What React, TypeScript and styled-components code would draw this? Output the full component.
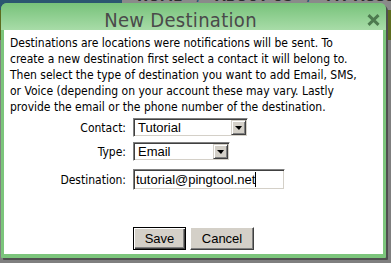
import styled, { createGlobalStyle } from "styled-components";

const GlobalStyle = createGlobalStyle`
	html, body {
		margin: 0;
		padding: 0;
	}
	body {
		background: #7f7f7f;
		overflow: hidden;
	}
`;

const Page = styled.div`
	position: relative;
	width: 391px;
	height: 263px;
	overflow: hidden;
	background: #7f7f7f;
`;

const TopBar = styled.div`
	display: flex;
	height: 10px;
	background: #2b5670;
`;

const Nav = styled.nav`
	margin-left: 122px;
	flex: 1;
	display: flex;
	align-items: flex-end;
	gap: 14px;
	padding-left: 15px;
	background: #8a8a8a;
	color: #2c2c2c;
	font: bold 15px "DejaVu Sans Condensed", "DejaVu Sans", sans-serif;
	line-height: 1;
	white-space: nowrap;
	overflow: hidden;

	& > span {
		margin-bottom: 6px;
	}
`;

const NavSep = styled.span`
	color: #2b5670;
`;

const OliveBand = styled.div`
	height: 30px;
	background: #5c6b1f;
`;

const Dialog = styled.section`
	position: absolute;
	left: 1px;
	top: 3px;
	width: 385px;
	height: 255px;
	box-sizing: border-box;
	display: flex;
	flex-direction: column;
	padding: 0 3px 4px;
	background: #7cc57c;
	border-radius: 6px 6px 1px 1px;
	box-shadow: 2px 2px 0 #4f4f4f;
`;

const TitleBar = styled.header`
	display: grid;
	grid-template-columns: 1fr auto;
	height: 27px;
	box-sizing: border-box;
	margin: 0 -3px;
	padding-top: 7px;
	border-radius: 6px 6px 0 0;
	background: linear-gradient(#77c27a, #a8dca8);
`;

const Title = styled.h1`
	margin: 0;
	padding-right: 7px;
	text-align: center;
	color: #4a4a4a;
	font: normal 20px "DejaVu Sans Condensed", "DejaVu Sans", sans-serif;
	letter-spacing: 0.3px;
	line-height: 20px;
`;

const Close = styled.svg`
	margin: 4px 6px 0 0;
	width: 13px;
	height: 12px;
`;

const Body = styled.div`
	flex: 1;
	background: #fff;
	padding: 5px 6px 2px;
	font: 12px "DejaVu Sans Condensed", "DejaVu Sans", sans-serif;
	line-height: 16px;
	color: #000;
`;

const Intro = styled.p`
	margin: 0;
	white-space: nowrap;
`;

const FieldRow = styled.div<{ $top: number }>`
	display: grid;
	grid-template-columns: 116px auto;
	column-gap: 7px;
	align-items: center;
	justify-items: start;
	margin-top: ${(p) => p.$top}px;
`;

const Label = styled.label`
	justify-self: end;
`;

const Inset = styled.div<{ $width: number; $height: number }>`
	width: ${(p) => p.$width}px;
	height: ${(p) => p.$height}px;
	box-sizing: border-box;
	display: flex;
	align-items: center;
	background: #fff;
	border: 1px solid;
	border-color: #808080 #fff #fff #808080;
	box-shadow: inset 1px 1px 0 #404040, inset -1px -1px 0 #d4d0c8;
	font: 13px "Liberation Sans", Arial, sans-serif;
	line-height: 15px;
	color: #000;
`;

const SelectText = styled.span`
	flex: 1;
	padding-left: 4px;
`;

const DropButton = styled.span`
	width: 15px;
	height: 15px;
	margin-right: 1px;
	box-sizing: border-box;
	display: flex;
	align-items: center;
	justify-content: center;
	background: #d4d0c8;
	border: 1px solid;
	border-color: #d4d0c8 #404040 #404040 #d4d0c8;
	box-shadow: inset 1px 1px 0 #fff, inset -1px -1px 0 #808080;

	&::after {
		content: "";
		border-left: 4px solid transparent;
		border-right: 3px solid transparent;
		border-top: 4px solid #000;
		margin-top: 1px;
	}
`;

const InputText = styled.span`
	padding-left: 2px;
	display: flex;
	align-items: center;
`;

const Caret = styled.span`
	display: inline-block;
	width: 1px;
	height: 15px;
	background: #000;
`;

const Buttons = styled.div`
	display: flex;
	gap: 4px;
	margin: 37px 0 0 123px;
`;

const Button = styled.button<{ $default?: boolean; $width: number }>`
	width: ${(p) => p.$width}px;
	height: 23px;
	box-sizing: border-box;
	padding: 0;
	background: #d4d0c8;
	color: #000;
	font: 13px "Liberation Sans", Arial, sans-serif;
	border: 1px solid;
	border-color: ${(p) => (p.$default ? "#000" : "#fff #404040 #404040 #fff")};
	box-shadow: ${(p) =>
		p.$default
			? "inset 1px 1px 0 #fff, inset -1px -1px 0 #404040, inset -2px -2px 0 #808080"
			: "inset -1px -1px 0 #808080"};
`;

export default function App() {
	return (
		<Page>
			<GlobalStyle />
			<TopBar>
				<Nav>
					<span>HOME</span>
					<NavSep>/</NavSep>
					<span>ABOUT US</span>
					<NavSep>/</NavSep>
					<span>MY ACCOUNT</span>
				</Nav>
			</TopBar>
			<OliveBand />
			<Dialog>
				<TitleBar>
					<Title>New Destination</Title>
					<Close viewBox="0 0 13 12">
						<path
							d="M1.5 1.2 L11.5 10.8 M11.5 1.2 L1.5 10.8"
							stroke="#4d7a4f"
							strokeWidth="3"
							fill="none"
						/>
					</Close>
				</TitleBar>
				<Body>
					<Intro>
						Destinations are locations were notifications will be sent. To
						<br />
						create a new destination first select a contact it will belong to.
						<br />
						Then select the type of destination you want to add Email, SMS,
						<br />
						or Voice (depending on your account these may vary. Lastly
						<br />
						provide the email or the phone number of the destination.
					</Intro>
					<FieldRow $top={3}>
						<Label>Contact:</Label>
						<Inset $width={115} $height={19}>
							<SelectText>Tutorial</SelectText>
							<DropButton />
						</Inset>
					</FieldRow>
					<FieldRow $top={5}>
						<Label>Type:</Label>
						<Inset $width={97} $height={19}>
							<SelectText>Email</SelectText>
							<DropButton />
						</Inset>
					</FieldRow>
					<FieldRow $top={8}>
						<Label>Destination:</Label>
						<Inset $width={152} $height={21}>
							<InputText>
								tutorial@pingtool.net
								<Caret />
							</InputText>
						</Inset>
					</FieldRow>
					<Buttons>
						<Button $default $width={53}>
							Save
						</Button>
						<Button $width={64}>Cancel</Button>
					</Buttons>
				</Body>
			</Dialog>
		</Page>
	);
}
